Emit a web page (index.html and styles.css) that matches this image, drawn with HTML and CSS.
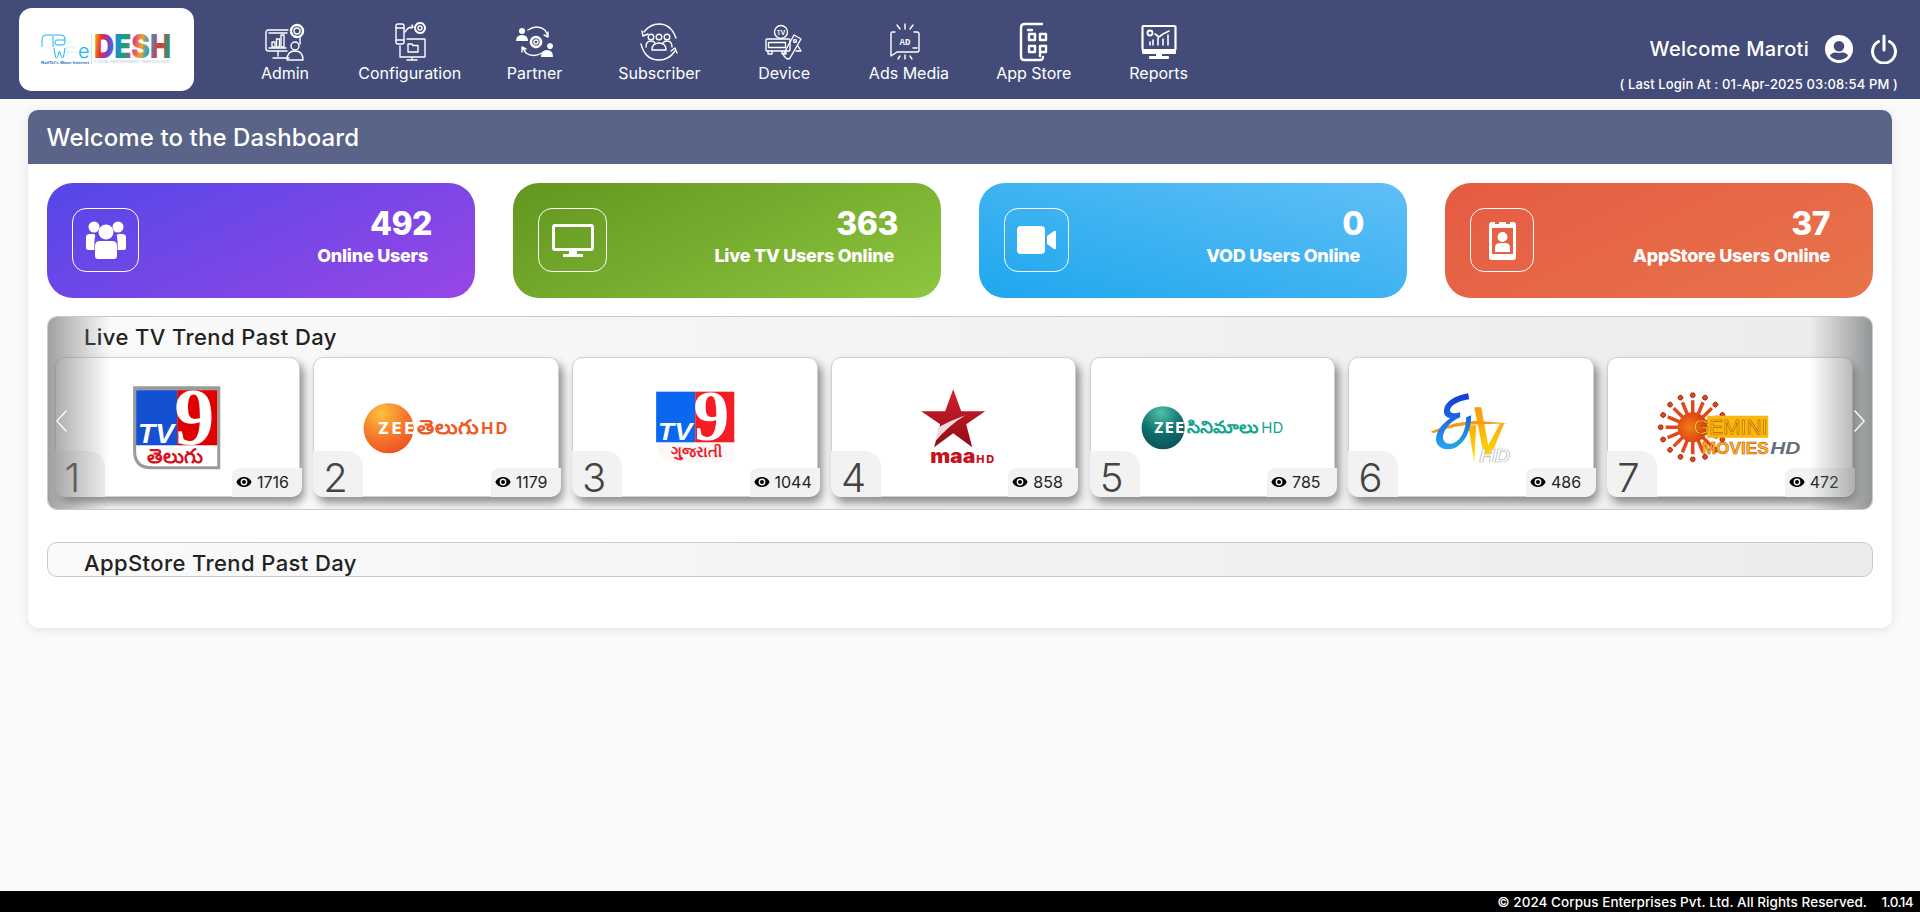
FILE: index.html
```html
<!DOCTYPE html>
<html lang="en">
<head>
<meta charset="utf-8">
<title>Dashboard</title>
<link rel="stylesheet" href="styles.css">
</head>
<body>
<svg class="defs" width="0" height="0" aria-hidden="true">
  <defs>
    <linearGradient id="desh" gradientUnits="userSpaceOnUse" x1="53" y1="0" x2="130" y2="10">
      <stop offset="0" stop-color="#f7c219"/><stop offset=".1" stop-color="#e8322e"/><stop offset=".2" stop-color="#7b3fc4"/><stop offset=".3" stop-color="#1e8fd8"/><stop offset=".42" stop-color="#18a36b"/><stop offset=".52" stop-color="#e03a8f"/><stop offset=".62" stop-color="#f3a21c"/><stop offset=".72" stop-color="#1fa0d8"/><stop offset=".85" stop-color="#e8322e"/><stop offset="1" stop-color="#12a383"/>
    </linearGradient>
    <radialGradient id="zeeO" cx=".35" cy=".2" r=".9"><stop offset="0" stop-color="#fdc13c"/><stop offset=".6" stop-color="#f4722a"/><stop offset="1" stop-color="#ee4a22"/></radialGradient>
    <radialGradient id="zeeG" cx=".45" cy=".15" r=".9"><stop offset="0" stop-color="#4fc1a8"/><stop offset=".55" stop-color="#0f6f6c"/><stop offset="1" stop-color="#0d4f55"/></radialGradient>
    <linearGradient id="star" x1="0" y1="0" x2="0" y2="1"><stop offset="0" stop-color="#d8202c"/><stop offset="1" stop-color="#8c0d18"/></linearGradient>
    <linearGradient id="etvB" x1="0" y1="0" x2="0" y2="1"><stop offset="0" stop-color="#1436d8"/><stop offset="1" stop-color="#27a8ee"/></linearGradient>
    <linearGradient id="etvY" x1="0" y1="0" x2="0" y2="1"><stop offset="0" stop-color="#f79a12"/><stop offset="1" stop-color="#ffe000"/></linearGradient>
    <radialGradient id="sun" cx=".4" cy=".5" r=".6"><stop offset="0" stop-color="#f47a1a"/><stop offset="1" stop-color="#d83c12"/></radialGradient>
    <g id="ray"><path d="M85.600 57V43" class="ray-line"/><circle cx="85.600" cy="38" r="2.400" class="ray-dot"/></g>
    <path id="eye" d="M8 3C4.400 3 1.400 5.200.4 8c1 2.800 4 5 7.600 5s6.600-2.200 7.600-5C14.600 5.200 11.600 3 8 3zm0 8.400A3.400 3.400 0 1 1 8 4.600a3.400 3.400 0 0 1 0 6.800zM8 6a2 2 0 1 0 0 4 2 2 0 0 0 0-4z"/>
  </defs>
</svg>

<header class="topbar">
  <div class="brand">
    <svg class="brand-mark" viewBox="0 0 131 31" role="img" aria-label="RailTel wave eDESH">
      <path class="wave" d="M1 13V5q0-4 4-4h7v12M13 1h7q4 0 4 4v3q0 3-3 3h-5q-2 0-2-2.500T16 6h8M13 14l1.500 9q.5 2 2 0l2-6 2 6q1 2 2 0l1.500-9"/>
      <path class="wave-faint" d="M25 8h7M25 13h10M26 13v10M26 18h10"/>
      <text class="wave-e" x="37" y="24">e</text>
      <rect class="brand-rule" x="50.500" y="0" width=".6" height="30"/>
      <text class="desh" x="53" y="24" textLength="77" lengthAdjust="spacingAndGlyphs">DESH</text>
      <text class="tiny" x="0" y="30" textLength="48" lengthAdjust="spacingAndGlyphs">RailTel's Wave Internet</text>
      <text class="tiny-faint" x="54" y="29" textLength="74" lengthAdjust="spacingAndGlyphs">DIGITAL EMPOWERMENT SERVICES HUB</text>
    </svg>
  </div>
  <nav class="nav">
    <a class="nav-item">
      <svg class="nav-icon" viewBox="0 0 40 40"><g class="ln">
        <path d="M23 8H3.500Q1 8 1 10.500V26.500Q1 29 3.500 29H22M4 11h18M4 26h17M13 29v5M8 36h16"/>
        <rect x="7" y="20" width="3" height="5"/><rect x="11.500" y="17" width="3" height="8"/><rect x="16" y="13" width="3" height="12"/>
        <circle cx="32" cy="9" r="3"/><circle cx="32" cy="9" r="6" stroke-dasharray="3 1.700" stroke-width="2.400"/>
        <circle cx="30" cy="24" r="4"/><path d="M22 38c0-6 3-9 8-9s8 3 8 9zM35 16v6"/></g></svg>
      <span>Admin</span>
    </a>
    <a class="nav-item">
      <svg class="nav-icon" viewBox="0 0 40 40"><g class="ln">
        <rect x="6" y="2" width="8" height="20" rx="2"/><path d="M6 6h8M6 18h8M15 10q3-5 7-5M22 3l1 2-2 1"/>
        <circle cx="30" cy="6" r="2"/><circle cx="30" cy="6" r="5" stroke-dasharray="2.600 1.400" stroke-width="2"/>
        <path d="M17 17h18v18H10V24M22 35v3M17 38h10"/><path d="M18 22h4l1 1.500h5V30H18z"/></g></svg>
      <span>Configuration</span>
    </a>
    <a class="nav-item">
      <svg class="nav-icon" viewBox="0 0 40 40"><g class="ln">
        <path d="M13 8q9-6 17 0l3 6M33 10v5l-4-2M27 31q-9 5-16 0l-4-6M7 30v-5l4 2"/>
        <circle cx="21" cy="20" r="2"/><circle cx="21" cy="20" r="5" stroke-dasharray="3 1.500" stroke-width="2.600"/></g>
        <g class="fl"><circle cx="7" cy="9" r="3"/><path d="M1 19q0-6 6-6t6 6zM32 24a3 3 0 1 1 0 .1zM26 35q0-7 6-7t6 7z"/></g></svg>
      <span>Partner</span>
    </a>
    <a class="nav-item">
      <svg class="nav-icon" viewBox="0 0 40 40"><g class="ln">
        <path d="M5 10Q11 2 20 2q12 0 17 14M36 29Q30 38 20 38 6 38 2 22"/><path d="M3 9l1 5 5-2M38 31l-2-5-4 3" />
        <circle cx="12" cy="15" r="2.800"/><circle cx="20" cy="15" r="2.800"/><circle cx="28" cy="15" r="2.800"/>
        <path d="M7 25q0-6 5-6 3 0 4 2M33 25q0-6-5-6-3 0-4 2M13 28q0-7 7-7t7 7z"/></g></svg>
      <span>Subscriber</span>
    </a>
    <a class="nav-item">
      <svg class="nav-icon" viewBox="0 0 40 40"><g class="ln">
        <circle cx="17" cy="10" r="6.500"/><rect x="2" y="17" width="24" height="12" rx="1"/><rect x="4.500" y="20.500" width="17" height="5"/><path d="M4 29v3h4v-3M18 29v3h4v-3"/>
        <path d="M30 13l7 4-11 19q-2 2-4 0l-2-2q-1-1 0-3z"/><circle cx="31" cy="19" r="1.500"/><path d="M34 24l3 5h-5"/></g>
        <text class="tv-mini" x="17" y="12.500">TV</text></svg>
      <span>Device</span>
    </a>
    <a class="nav-item">
      <svg class="nav-icon nav-icon-ads" viewBox="0 0 40 40"><g class="ln">
        <path d="M10 10H7.500Q6 10 6 11.500V34l6-4h20q2 0 2-2V12q0-2-2-2h-3M20 2v5M12 3l3 4M28 3l-3 4M20 33v4M13 37l2-3M27 37l-2-3M28 26h4"/></g>
        <text class="ad-mini" x="20" y="23">AD</text></svg>
      <span>Ads Media</span>
    </a>
    <a class="nav-item">
      <svg class="nav-icon" viewBox="0 0 40 40"><g class="ln ln-heavy">
        <path d="M28 2H10.500Q7 2 7 5.500V34.500Q7 38 10.500 38H26q3 0 3-3M14 8h4"/>
        <rect x="15" y="12" width="6" height="6"/><rect x="26" y="12" width="6" height="6"/><rect x="15" y="24" width="6" height="6"/><path d="M26 34V24h6v6h-6"/></g></svg>
      <span>App Store</span>
    </a>
    <a class="nav-item">
      <svg class="nav-icon" viewBox="0 0 40 40"><g class="ln">
        <rect x="3.500" y="4" width="33" height="24" rx="1" stroke-width="2.200"/><circle cx="11" cy="11" r="2.500" stroke-width="1.800"/>
        <path d="M16 12l4 3 4-3 6-3M14 23v-5M19 23v-7M24 23v-6M29 23v-10M11 20v3" stroke-width="1.600"/></g>
        <g class="fl"><rect x="3" y="27" width="34" height="5" rx="1"/><rect x="17" y="31" width="6" height="4"/><rect x="10" y="34" width="20" height="3" rx="1"/></g></svg>
      <span>Reports</span>
    </a>
  </nav>
  <div class="account">
    <div class="account-top">
      <span class="welcome">Welcome Maroti</span>
      <svg class="user-icon" viewBox="0 0 30 30"><path class="fl" fill-rule="evenodd" d="M15 1a14 14 0 1 0 0 28 14 14 0 0 0 0-28zm0 6a5.300 5.300 0 1 1 0 10.600A5.300 5.300 0 0 1 15 7zm0 19c-3.700 0-7-1.700-9.200-4.300 1-2 3-3.300 5.200-3.300.300 0 .500 0 .700.100 1 .300 2.100.500 3.300.500s2.300-.200 3.300-.500c.200-.100.400-.100.700-.100 2.200 0 4.200 1.300 5.200 3.300C22 24.300 18.700 26 15 26z"/></svg>
      <svg class="power-icon" viewBox="0 0 27 30"><path class="power" d="M13.500 2v14M8 7.500a11.500 11.500 0 1 0 11 0"/></svg>
    </div>
    <div class="last-login">( Last Login At : 01-Apr-2025 03:08:54 PM )</div>
  </div>
</header>

<main class="dash">
  <h1 class="dash-head">Welcome to the Dashboard</h1>
  <div class="dash-body">
    <section class="stats">
      <article class="stat stat-violet">
        <div class="stat-icon box-a">
          <svg class="ic-users" viewBox="0 0 42 38"><g class="fl">
            <circle cx="9" cy="6" r="5.500"/><circle cx="33" cy="6" r="5.500"/><path d="M1 27V16q0-3 4-3h3q3 0 2 3-1 4-.5 13H3q-2 0-2-2zM41 27V16q0-3-4-3h-3q-3 0-2 3 1 4 .5 13H39q2 0 2-2z"/>
            <circle cx="21" cy="11" r="7.500"/><path d="M10 35V25q0-5 5-5h12q5 0 5 5v10q0 3-3 3H13q-3 0-3-3z"/></g></svg>
        </div>
        <div class="stat-text"><div class="stat-num">492</div><div class="stat-label">Online Users</div></div>
      </article>
      <article class="stat stat-green">
        <div class="stat-icon box-b">
          <svg class="ic-desktop" viewBox="0 0 42 33"><path class="fl" fill-rule="evenodd" d="M3 0h36q3 0 3 3v21q0 3-3 3H25v3h6v3H11v-3h6v-3H3q-3 0-3-3V3q0-3 3-3zm0 3v21h36V3z"/></svg>
        </div>
        <div class="stat-text"><div class="stat-num">363</div><div class="stat-label">Live TV Users Online</div></div>
      </article>
      <article class="stat stat-blue">
        <div class="stat-icon box-c">
          <svg class="ic-video" viewBox="0 0 39 28"><path class="fl" d="M4 0h20q4 0 4 4v20q0 4-4 4H4q-4 0-4-4V4q0-4 4-4zM30 10l7-5q2-1 2 1v16q0 2-2 1l-7-5z"/></svg>
        </div>
        <div class="stat-text"><div class="stat-num">0</div><div class="stat-label">VOD Users Online</div></div>
      </article>
      <article class="stat stat-red">
        <div class="stat-icon box-d">
          <svg class="ic-badge" viewBox="0 0 27 39"><path class="fl" fill-rule="evenodd" d="M3 1h3v2h4V1h7v2h4V1h3q3 0 3 3v32q0 3-3 3H3q-3 0-3-3V4q0-3 3-3zm0 6v26h21V7zM13.500 11a5 5 0 1 1 0 10 5 5 0 0 1 0-10zM6 31v-4q0-5 5-5h5q5 0 5 5v4z"/></svg>
        </div>
        <div class="stat-text stat-text-flush"><div class="stat-num">37</div><div class="stat-label">AppStore Users Online</div></div>
      </article>
    </section>

    <section class="trend">
      <h2 class="trend-title">Live TV Trend Past Day</h2>
      <div class="trend-track">
        <article class="channel">
          <svg class="logo" viewBox="0 0 245 139">
            <path d="M78 29h87v83H96q-18 0-18-18z" fill="#9a9a9a"/>
            <path d="M81 33h81v76H97q-16 0-16-15z" fill="#fff"/>
            <rect x="81" y="33" width="41" height="55" fill="#1450d2"/><rect x="122" y="33" width="40" height="55" fill="#e00000"/>
            <text class="logo-9" x="139" y="87" font-size="80">9</text>
            <text class="logo-tv" x="83" y="86" font-size="27" textLength="36" lengthAdjust="spacingAndGlyphs">TV</text>
            <text class="logo-script" x="120" y="106" font-size="20" fill="#d8101c">తెలుగు</text>
          </svg>
          <div class="rank">1</div>
          <div class="views"><svg class="eye" viewBox="0 0 16 16"><use href="#eye"/></svg>1716</div>
        </article>
        <article class="channel">
          <svg class="logo" viewBox="0 0 245 139">
            <circle cx="75.500" cy="71" r="25" fill="url(#zeeO)"/>
            <text class="logo-zee" x="65" y="77" font-size="16" textLength="36">ZEE</text>
            <text class="logo-script-l" x="104" y="77" font-size="20" fill="#ee5a24" textLength="62" lengthAdjust="spacingAndGlyphs">తెలుగు</text>
            <text class="logo-hd" x="168" y="77" font-size="16" fill="#ee5a24" textLength="26">HD</text>
          </svg>
          <div class="rank">2</div>
          <div class="views"><svg class="eye" viewBox="0 0 16 16"><use href="#eye"/></svg>1179</div>
        </article>
        <article class="channel">
          <svg class="logo" viewBox="0 0 245 139">
            <path d="M84 85h78v20H102q-16 0-18-20z" fill="#fbf8f8"/>
            <rect x="84" y="34.500" width="39" height="50.500" fill="#0a68f0"/><rect x="123" y="34.500" width="39" height="50.500" fill="#f51c24"/>
            <text class="logo-9" x="139" y="83" font-size="72">9</text>
            <text class="logo-tv" x="86" y="83" font-size="24" textLength="34" lengthAdjust="spacingAndGlyphs">TV</text>
            <text class="logo-script" x="124" y="100" font-size="15" fill="#e8202c">ગુજરાતી</text>
          </svg>
          <div class="rank">3</div>
          <div class="views"><svg class="eye" viewBox="0 0 16 16"><use href="#eye"/></svg>1044</div>
        </article>
        <article class="channel">
          <svg class="logo" viewBox="0 0 245 139">
            <polygon points="122,32 130,54 154,54 135,67 141,90 122,76 103,90 109,67 90,54 114,54" fill="url(#star)"/>
            <path d="M104 84q14-16 30-26-14 5-27 12z" fill="#f3d9dc"/>
            <text class="logo-maa" x="99" y="106" font-size="19" textLength="45" lengthAdjust="spacingAndGlyphs">maa</text>
            <text class="logo-maa-hd" x="145" y="106" font-size="11" textLength="18">HD</text>
          </svg>
          <div class="rank">4</div>
          <div class="views"><svg class="eye" viewBox="0 0 16 16"><use href="#eye"/></svg>858</div>
        </article>
        <article class="channel">
          <svg class="logo" viewBox="0 0 245 139">
            <circle cx="73" cy="70.500" r="21.500" fill="url(#zeeG)"/>
            <text class="logo-zee" x="64" y="76" font-size="14" textLength="30">ZEE</text>
            <text class="logo-script-l" x="97" y="76" font-size="17" fill="#10a58e" textLength="71" lengthAdjust="spacingAndGlyphs">సినిమాలు</text>
            <text class="logo-hd-thin" x="171" y="76" font-size="15" fill="#10a58e" textLength="22">HD</text>
          </svg>
          <div class="rank">5</div>
          <div class="views"><svg class="eye" viewBox="0 0 16 16"><use href="#eye"/></svg>785</div>
        </article>
        <article class="channel">
          <svg class="logo" viewBox="0 0 245 139">
            <path d="M120 68h8l-2 37zM126 50h7l7 38 12-22h4l-14 34h-6z" fill="url(#etvY)"/>
            <path d="M83 74q30-12 50-10l27 2-27 1q-25 0-48 9z" fill="#f59a12"/>
            <path fill="url(#etvB)" d="M120 36C108 38 97 44 96 52c-1 6 2 8 6 9-10 7-15 15-14 23 2 8 12 10 20 6 10-6 15-18 15-32l-5 2c0 12-5 23-13 26-7 2-11-2-10-8 2-8 8-14 17-18v-5c-6 2-11 1-10-3 2-6 12-9 19-10z"/>
            <text class="logo-etv-hd" x="131" y="105" font-size="18" textLength="31" lengthAdjust="spacingAndGlyphs">HD</text>
          </svg>
          <div class="rank">6</div>
          <div class="views"><svg class="eye" viewBox="0 0 16 16"><use href="#eye"/></svg>486</div>
        </article>
        <article class="channel">
          <svg class="logo" viewBox="0 0 245 139">
            <g>
              <use href="#ray"/><use href="#ray" transform="rotate(22.500 85.600 70)"/><use href="#ray" transform="rotate(45 85.600 70)"/><use href="#ray" transform="rotate(135 85.600 70)"/><use href="#ray" transform="rotate(157.500 85.600 70)"/><use href="#ray" transform="rotate(180 85.600 70)"/><use href="#ray" transform="rotate(202.500 85.600 70)"/><use href="#ray" transform="rotate(225 85.600 70)"/><use href="#ray" transform="rotate(247.500 85.600 70)"/><use href="#ray" transform="rotate(270 85.600 70)"/><use href="#ray" transform="rotate(292.500 85.600 70)"/><use href="#ray" transform="rotate(315 85.600 70)"/><use href="#ray" transform="rotate(337.500 85.600 70)"/><use href="#ray" transform="rotate(67.500 85.600 70)"/><use href="#ray" transform="rotate(112.500 85.600 70)"/>
            </g>
            <circle cx="85.600" cy="70" r="15" fill="url(#sun)"/>
            <rect x="100" y="58.500" width="61" height="22" fill="#f7b70c"/>
            <text class="logo-gemini" x="86" y="77" font-size="21" textLength="74" lengthAdjust="spacingAndGlyphs">GEMINI</text>
            <text class="logo-movies" x="94.500" y="97" font-size="17" textLength="67" lengthAdjust="spacingAndGlyphs">MOVIES</text>
            <text class="logo-gem-hd" x="163" y="97" font-size="17" textLength="30" lengthAdjust="spacingAndGlyphs">HD</text>
          </svg>
          <div class="rank">7</div>
          <div class="views"><svg class="eye" viewBox="0 0 16 16"><use href="#eye"/></svg>472</div>
        </article>
      </div>
      <div class="shade shade-left"></div>
      <div class="shade shade-right"></div>
      <svg class="arrow arrow-left" viewBox="0 0 11 22"><path d="M10.500.500L.800 11l9.700 10.500"/></svg>
      <svg class="arrow arrow-right" viewBox="0 0 11 22"><path d="M.500.500L10.200 11 .500 21.500"/></svg>
    </section>

    <section class="trend trend-empty">
      <h2 class="trend-title">AppStore Trend Past Day</h2>
    </section>
  </div>
</main>

<footer class="foot">
  <span>© 2024 Corpus Enterprises Pvt. Ltd. All Rights Reserved.</span>
  <span class="version">1.0.14</span>
</footer>
</body>
</html>
```
FILE: styles.css
```css
* { box-sizing: border-box; }
html, body { height: 100%; }
body {
  margin: 0;
  min-height: 912px;
  height: 912px;
  overflow: hidden;
  display: flex;
  flex-direction: column;
  background: #fafafa;
  color: #222;
  font-family: Inter, "Noto Sans", sans-serif;
}
.defs { position: absolute; }
.ln { fill: none; stroke: #fff; stroke-width: 1.4; stroke-linecap: round; stroke-linejoin: round; }
.ln-heavy { stroke-width: 2.4; }
.fl { fill: #fff; }

/* top bar */
.topbar {
  flex: none;
  height: 99px;
  background: #434c78;
  display: flex;
  color: #fff;
}
.brand {
  flex: none;
  width: 175px;
  height: 83px;
  margin: 8px 0 0 19px;
  background: #fff;
  border-radius: 13px;
  display: flex;
  align-items: center;
  justify-content: center;
}
.brand-mark { width: 131px; height: 31px; overflow: visible; }
.wave { fill: none; stroke: #22b0ee; stroke-width: 1; }
.wave-faint { fill: none; stroke: #cdeefb; stroke-width: .8; }
.wave-e { font-size: 20px; fill: #22b0ee; font-weight: 300; }
.brand-rule { fill: #9fd8f2; }
.desh { font: 900 33px Inter, sans-serif; fill: url(#desh); }
.tiny { font: 700 4px "Liberation Sans", sans-serif; fill: #1b6fc0; }
.tiny-faint { font: 400 3px "Liberation Sans", sans-serif; fill: #b9cbe0; }

.nav { display: flex; margin-left: 28.600px; }
.nav-item {
  width: 124.800px;
  padding-top: 22px;
  display: flex;
  flex-direction: column;
  align-items: center;
  font-size: 16px;
  font-weight: 400;
  color: #fff;
}
.nav-icon { width: 40px; height: 40px; flex: none; }
.nav-icon-ads { margin-right: 8px; }
.nav-item span { line-height: 22px; }
.tv-mini { font: 700 6px Inter, sans-serif; fill: #fff; text-anchor: middle; }
.ad-mini { font: 600 9px "Liberation Mono", monospace; fill: #fff; text-anchor: middle; }

.account {
  margin-left: auto;
  width: 300px;
  padding: 34px 22px 0 0;
  display: flex;
  flex-direction: column;
  align-items: flex-end;
}
.account-top { display: flex; align-items: center; height: 30px; }
.welcome { font-size: 20px; font-weight: 500; letter-spacing: .3px; margin-right: 15px; }
.user-icon { width: 30px; height: 30px; margin-right: 16px; }
.power-icon { width: 28px; height: 30px; }
.power { fill: none; stroke: #fff; stroke-width: 3; stroke-linecap: round; }
.last-login { margin-top: 10px; font-size: 13px; font-weight: 500; letter-spacing: .15px; line-height: 20px; white-space: pre; }

/* main card */
.dash {
  flex: none;
  margin: 11px 28px 0;
  background: #fff;
  border-radius: 10px;
  box-shadow: 0 2px 10px rgba(60, 70, 90, .12);
}
.dash-head {
  margin: 0;
  height: 54px;
  padding: 0 18.500px;
  display: flex;
  align-items: center;
  background: #5a6488;
  border-radius: 10px 10px 0 0;
  color: #fff;
  font-size: 24px;
  font-weight: 500;
  letter-spacing: .1px;
}
.dash-body { padding: 19px 19px 51px; }

/* stat cards */
.stats { display: grid; grid-template-columns: repeat(4, 428px); gap: 38px; }
.stat {
  height: 115px;
  border-radius: 26px;
  padding: 25px 43px 0 25px;
  display: flex;
  justify-content: space-between;
  color: #fff;
}
.stat-violet { background: linear-gradient(155deg, #5447e8, #9846e6); }
.stat-green { background: linear-gradient(155deg, #62961f, #8dc63f); }
.stat-blue { background: linear-gradient(to top right, #1ea7ee, #60bff6); }
.stat-red { background: linear-gradient(155deg, #e55b43, #e8744a); }
.stat-icon {
  flex: none;
  height: 64px;
  border: 1px solid #fff;
  border-radius: 14px;
  display: flex;
  align-items: center;
  justify-content: center;
}
.box-a { width: 67px; }
.box-b { width: 69px; }
.box-c { width: 65px; }
.box-d { width: 64px; }
.ic-users { width: 42px; height: 38px; }
.ic-desktop { width: 42px; height: 33px; }
.ic-video { width: 39px; height: 28px; }
.ic-badge { width: 27px; height: 39px; }
.stat-text { text-align: right; }
.stat-num { font-size: 32px; font-weight: 800; line-height: 38px; margin-top: -3px; letter-spacing: -.5px; }
.stat-label { font-size: 18px; font-weight: 800; line-height: 24px; margin-top: 1px; padding-right: 4px; letter-spacing: -.25px; }
.stat-text-flush .stat-label { padding-right: 0; }

/* trend panels */
.trend {
  position: relative;
  margin-top: 18px;
  height: 194px;
  border: 1px solid #c9c9c9;
  border-radius: 10px;
  overflow: hidden;
  background: linear-gradient(90deg, #fbfafa, #ebeced);
}
.trend-empty { margin-top: 32px; height: 35px; }
.trend-title {
  margin: 0;
  height: 40px;
  line-height: 40px;
  padding-left: 36px;
  font-size: 22px;
  font-weight: 500;
  letter-spacing: .4px;
  color: #222;
}
.trend-empty .trend-title { line-height: 41px; }
.trend-track {
  display: grid;
  grid-template-columns: repeat(7, 1fr);
  gap: 13.400px;
  padding: 0 19.300px 0 6.500px;
}
.channel {
  position: relative;
  height: 139.500px;
  background: #fff;
  border: 1px solid #cfcfcf;
  border-radius: 10px;
  box-shadow: 4px 6px 8px rgba(0, 0, 0, .42);
}
.logo { display: block; position: absolute; left: -1px; top: -1px; width: 245.400px; height: 139.500px; }
.rank {
  position: absolute;
  left: -1px;
  bottom: -1px;
  width: 50px;
  height: 46px;
  padding-left: 10px;
  background: #f2f2f2;
  border-radius: 0 16px 0 10px;
  font-size: 40px;
  font-weight: 300;
  line-height: 54px;
  color: #444;
}
.views {
  position: absolute;
  right: -3px;
  bottom: -1px;
  height: 29px;
  width: 70px;
  padding-left: 4px;
  display: flex;
  align-items: center;
  background: #f2f2f2;
  border-radius: 8px 0 10px 0;
  font-size: 16px;
  color: #222;
}
.eye { width: 16px; height: 16px; margin-right: 5px; flex: none; }

.shade { position: absolute; top: 0; bottom: 0; width: 62px; pointer-events: none; }
.shade-left { left: 0; background: linear-gradient(90deg, rgba(130, 130, 130, .75), rgba(130, 130, 130, 0)); }
.shade-right { right: 0; background: linear-gradient(270deg, rgba(125, 128, 130, .8), rgba(125, 128, 130, 0)); }
.arrow { position: absolute; top: 93px; width: 11px; height: 22px; fill: none; stroke: #fff; stroke-width: 1.3; }
.arrow-left { left: 8px; }
.arrow-right { right: 7px; }

/* logo text */
.logo-9 { font-family: "Liberation Serif", serif; font-weight: 700; fill: #fff; text-anchor: middle; }
.logo-tv { font-family: "Liberation Sans", sans-serif; font-style: italic; font-weight: 700; fill: #fff; }
.logo-script { font-family: "Noto Sans", sans-serif; font-weight: 700; text-anchor: middle; }
.logo-script-l { font-family: "Noto Sans", sans-serif; font-weight: 700; }
.logo-zee { font-family: Inter, sans-serif; font-weight: 800; fill: #fff; }
.logo-hd { font-family: Inter, sans-serif; font-weight: 700; }
.logo-hd-thin { font-family: Inter, sans-serif; font-weight: 400; }
.logo-maa { font-family: Inter, sans-serif; font-weight: 900; fill: #c4141e; }
.logo-maa-hd { font-family: Inter, sans-serif; font-weight: 800; fill: #c4141e; }
.logo-etv-hd { font-family: "Liberation Sans", sans-serif; font-style: italic; font-weight: 700; fill: #fff; stroke: #bbb; stroke-width: .7; }
.ray-line { fill: none; stroke: #e2481a; stroke-width: 3.500; }
.ray-dot { fill: #e2481a; stroke: #8e1c10; stroke-width: .8; }
.logo-gemini { font-family: "Liberation Sans", sans-serif; fill: #ffd814; stroke: #b02a0c; stroke-width: .5; }
.logo-movies { font-family: "Liberation Sans", sans-serif; font-weight: 700; fill: #f7c00c; stroke: #c8300e; stroke-width: .5; }
.logo-gem-hd { font-family: "Liberation Sans", sans-serif; font-weight: 700; font-style: italic; fill: #666e78; }

/* footer */
.foot {
  margin-top: auto;
  flex: none;
  height: 21px;
  background: #000;
  color: #fff;
  display: flex;
  justify-content: flex-end;
  align-items: center;
  padding-right: 7px;
  font-size: 13.500px;
  font-weight: 500;
  letter-spacing: .05px;
}
.version { margin-left: 14.500px; letter-spacing: -.6px; }
```
